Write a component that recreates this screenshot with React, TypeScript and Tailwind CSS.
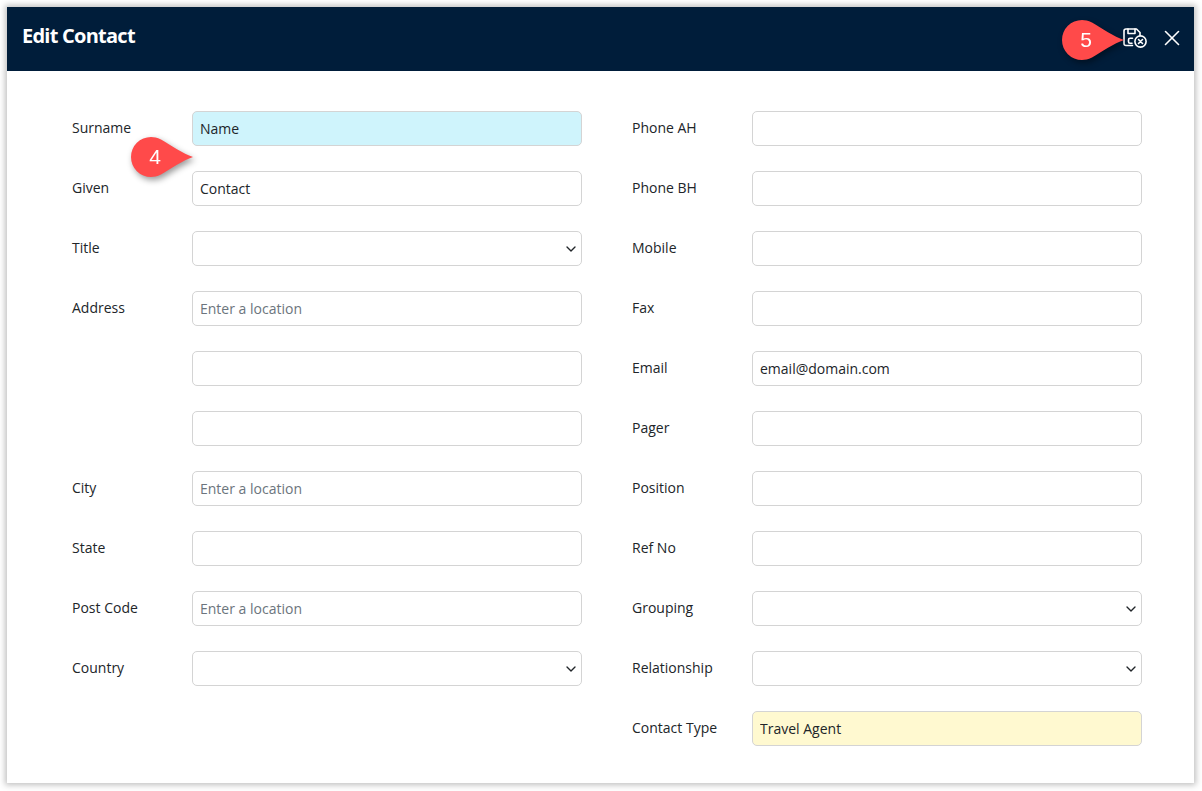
import { ChevronDown, X } from 'lucide-react';

interface Field {
  label?: string;
  kind?: 'input' | 'select';
  value?: string;
  placeholder?: string;
  bg?: string;
}

const leftFields: Field[] = [
  { label: 'Surname', value: 'Name', bg: 'bg-[#cff4fc]' },
  { label: 'Given', value: 'Contact' },
  { label: 'Title', kind: 'select' },
  { label: 'Address', placeholder: 'Enter a location' },
  {},
  {},
  { label: 'City', placeholder: 'Enter a location' },
  { label: 'State' },
  { label: 'Post Code', placeholder: 'Enter a location' },
  { label: 'Country', kind: 'select' },
];

const rightFields: Field[] = [
  { label: 'Phone AH' },
  { label: 'Phone BH' },
  { label: 'Mobile' },
  { label: 'Fax' },
  { label: 'Email', value: 'email@domain.com' },
  { label: 'Pager' },
  { label: 'Position' },
  { label: 'Ref No' },
  { label: 'Grouping', kind: 'select' },
  { label: 'Relationship', kind: 'select' },
  { label: 'Contact Type', value: 'Travel Agent', bg: 'bg-[#fff9d0]' },
];

function FormRow({ field }: { field: Field }) {
  return (
    <div className="flex items-center h-[35px]">
      <label className="w-[120px] shrink-0 text-[14px] text-[#212529] -mt-[2px]">{field.label}</label>
      {field.kind === 'select' ? (
        <div className="flex-1 h-[35px] flex items-center justify-end pr-[2px] bg-white border border-[#d4d4d4] rounded-[5px]">
          <ChevronDown size={16} strokeWidth={2} className="text-[#212529]" />
        </div>
      ) : (
        <input
          readOnly
          value={field.value ?? ''}
          placeholder={field.placeholder}
          className={`flex-1 min-w-0 h-[35px] px-[7px] text-[14px] text-[#212529] placeholder:text-[#6c757d] border border-[#d4d4d4] rounded-[5px] outline-none ${field.bg ?? 'bg-white'}`}
        />
      )}
    </div>
  );
}

function Callout({ n, className }: { n: number; className: string }) {
  return (
    <div className={`absolute w-[62px] h-[40px] drop-shadow-[2px_3px_3px_rgba(0,0,0,0.4)] ${className}`}>
      <svg width="62" height="40" viewBox="0 0 62 40" className="absolute inset-0">
        <path d="M62 20 C52 23 40 32 30 37.5 C26 39.3 23 40 20 40 A20 20 0 0 1 20 0 C23 0 26 .7 30 2.5 C40 8 52 17 62 20 Z" fill="#ff4a4a" />
      </svg>
      <span className="absolute left-0 top-0 w-[48px] h-[40px] flex items-center justify-center text-white text-[21px] font-['Liberation_Sans',sans-serif]">
        {n}
      </span>
    </div>
  );
}

function SaveCancelIcon() {
  return (
    <svg width="24" height="20" viewBox="0 0 24 20" fill="none" stroke="white" strokeWidth="1.6" strokeLinecap="round" strokeLinejoin="round">
      <path d="M9.5 17.5H3a2 2 0 0 1-2-2V3a2 2 0 0 1 2-2h10.5L17 4.5V7.5" />
      <path d="M5 1v4.5h7V1" />
      <path d="M9.5 10.2H7a1.5 1.5 0 0 0-1.5 1.5v2A1.5 1.5 0 0 0 7 15.2h2" />
      <circle cx="17.5" cy="13.5" r="5.6" />
      <path d="M15.5 11.5l4 4M19.5 11.5l-4 4" />
    </svg>
  );
}

export default function App() {
  return (
    <div className="relative w-[1202px] h-[791px] bg-white p-[7px] pb-[8px] pr-[8px] font-['Open_Sans',sans-serif]">
      <div className="h-full bg-white shadow-[0_0_6px_2px_rgba(0,0,0,0.25)]">
        {/* Header */}
        <div className="h-[64px] bg-[#001d3a] flex items-center justify-between pl-[15px] pr-[9px]">
          <h1 className="text-[20px] font-bold tracking-[-0.75px] text-white -mt-[6px]">Edit Contact</h1>
          <div className="flex items-center gap-[12px] -mt-[2px]">
            <SaveCancelIcon />
            <X size={26} strokeWidth={1.5} className="text-white" />
          </div>
        </div>

        {/* Form */}
        <div className="grid grid-cols-[510px_510px] gap-x-[50px] pt-[40px] pl-[65px]">
          <div className="flex flex-col gap-[25px]">
            {leftFields.map((f, i) => (
              <FormRow key={i} field={f} />
            ))}
          </div>
          <div className="flex flex-col gap-[25px]">
            {rightFields.map((f, i) => (
              <FormRow key={i} field={f} />
            ))}
          </div>
        </div>
      </div>

      <Callout n={4} className="left-[131px] top-[137px]" />
      <Callout n={5} className="left-[1062px] top-[20px]" />
    </div>
  );
}
